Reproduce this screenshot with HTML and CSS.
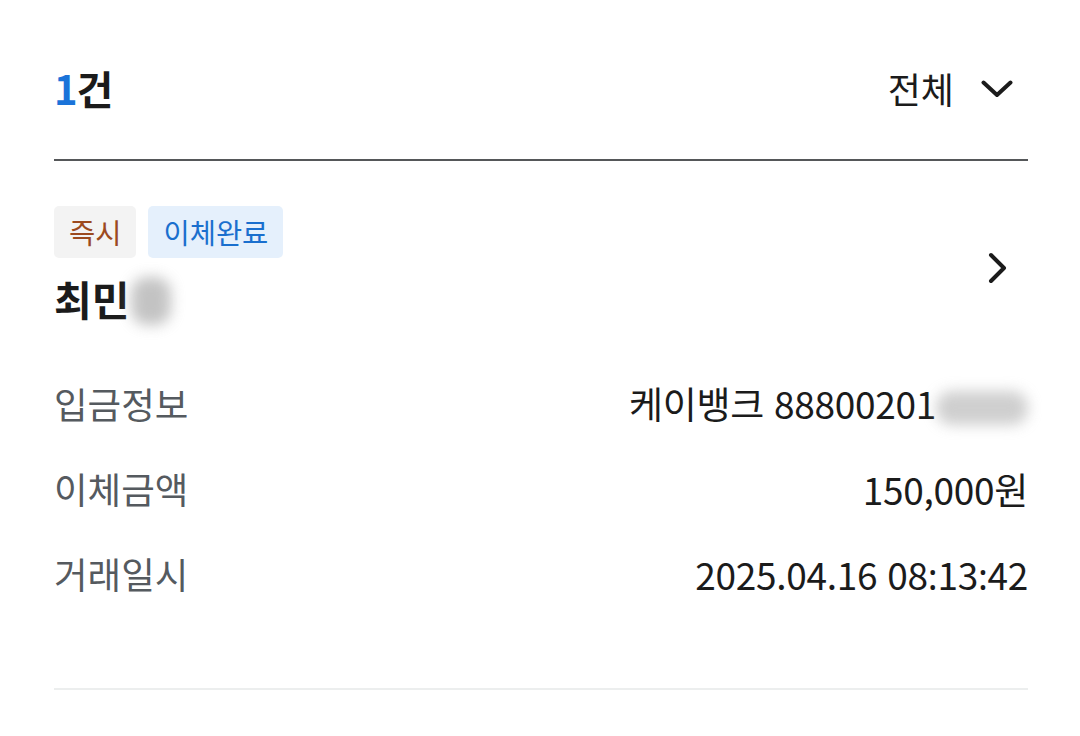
FILE: index.html
```html
<!DOCTYPE html>
<html lang="ko">
<head>
<meta charset="utf-8">
<link rel="stylesheet" href="styles.css">
</head>
<body>
<div class="page">
  <div class="header">
    <div class="count"><span class="num">1</span>건</div>
    <div class="filter">
      <span>전체</span>
      <svg class="chev-down" width="32" height="18" viewBox="0 0 32 18"><path d="M2.5 2.5 L16 15 L29.5 2.5" fill="none" stroke="#1b1b1b" stroke-width="4" stroke-linecap="round" stroke-linejoin="round"/></svg>
    </div>
  </div>
  <div class="card">
    <div class="card-top">
      <div class="card-main">
        <div class="tags">
          <span class="tag tag-gray">즉시</span>
          <span class="tag tag-blue">이체완료</span>
        </div>
        <div class="name">최민<span class="blur blur-name"></span></div>
      </div>
      <svg class="chev-right" width="20" height="32" viewBox="0 0 20 32"><path d="M3 3 L16 16 L3 29" fill="none" stroke="#1b1b1b" stroke-width="4" stroke-linecap="round" stroke-linejoin="round"/></svg>
    </div>
    <div class="rows">
      <div class="row"><span class="label">입금정보</span><span class="value">케이뱅크 88800201<span class="blur blur-acct"></span></span></div>
      <div class="row"><span class="label">이체금액</span><span class="value">150,000원</span></div>
      <div class="row"><span class="label">거래일시</span><span class="value">2025.04.16 08<span class="colon">:</span>13<span class="colon">:</span>42</span></div>
    </div>
  </div>
</div>
</body>
</html>
```
FILE: styles.css
```css
html, body {
  margin: 0;
  padding: 0;
  background: #ffffff;
}
body {
  font-family: "Noto Sans CJK KR", "Noto Sans", sans-serif;
  color: #1b1b1b;
}
.page {
  width: 974px;
  padding: 0 52px 0 54px;
}
.header {
  height: 143px;
  padding-top: 16px;
  display: flex;
  align-items: center;
  justify-content: space-between;
  border-bottom: 2px solid #555759;
}
.count {
  font-size: 40px;
  font-weight: 700;
  letter-spacing: -1px;
  line-height: 1;
}
.num {
  color: #1a73d9;
}
.filter {
  display: flex;
  align-items: center;
  gap: 27px;
  font-size: 36px;
  line-height: 1;
  padding-right: 15px;
}
.chev-down {
  display: block;
  margin-top: 2px;
}
.card {
  padding-top: 45px;
  padding-bottom: 71px;
  border-bottom: 2px solid #eceeee;
}
.card-top {
  display: flex;
  align-items: center;
  justify-content: space-between;
}
.chev-right {
  display: block;
  margin-right: 20px;
}
.tags {
  display: flex;
  gap: 12px;
}
.tag {
  display: inline-flex;
  align-items: center;
  height: 52px;
  padding: 0 15px;
  border-radius: 5px;
  font-size: 28.5px;
  line-height: 1;
}
.tag-gray {
  background: #f3f3f3;
  color: #9c4a1e;
}
.tag-blue {
  background: #e5f0fc;
  color: #1a6fce;
}
.name {
  margin-top: 15px;
  height: 57px;
  font-size: 41px;
  font-weight: 700;
  line-height: 50px;
  display: flex;
  align-items: flex-start;
}
.blur {
  display: inline-block;
  background: #9a9a9a;
  filter: blur(7px);
  border-radius: 16px;
}
.blur-name {
  width: 40px;
  height: 48px;
  margin-left: 2px;
  margin-top: 4px;
  background: #a4a4a4;
  opacity: 0.65;
}
.blur-acct {
  width: 92px;
  height: 34px;
  margin-left: 0;
  vertical-align: -6px;
  background: #a8a8a8;
  opacity: 0.55;
}
.rows {
  margin-top: 32px;
}
.row {
  height: 85px;
  display: flex;
  align-items: center;
  justify-content: space-between;
}
.label {
  font-size: 36.5px;
  color: #555a5f;
  line-height: 1;
}
.value {
  font-size: 37px;
  color: #1b1b1b;
  line-height: 1;
  letter-spacing: -0.3px;
  white-space: nowrap;
}
.colon {
  font-family: "Noto Sans", sans-serif;
}
```
